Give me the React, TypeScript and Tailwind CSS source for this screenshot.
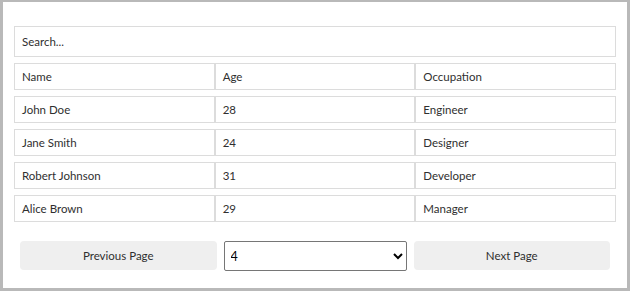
import React from "react";

const rows = [
  ["John Doe", "28", "Engineer"],
  ["Jane Smith", "24", "Designer"],
  ["Robert Johnson", "31", "Developer"],
  ["Alice Brown", "29", "Manager"],
];

function Cell({ children }: { children: React.ReactNode }) {
  return (
    <div className="h-[27px] border border-[#dcdcdc] px-[7px] pt-px flex items-center text-[11.5px] text-[#2f2f2f]">
      {children}
    </div>
  );
}

export default function App() {
  return (
    <div
      className="w-[630px] h-[291px] bg-white border-x-[3px] border-b-[3px] border-t-2 border-[#b9b9b9] px-[11px] pt-[24px]"
      style={{ fontFamily: 'Lato, "Noto Sans", sans-serif' }}
    >
      <input
        className="w-full h-[31px] border border-[#dcdcdc] px-[7px] text-[11.5px] text-[#2f2f2f] placeholder:text-[#2f2f2f] outline-none"
        placeholder="Search..."
      />
      <div className="mt-[6px] flex flex-col gap-[6px]">
        <div className="grid grid-cols-3">
          <Cell>Name</Cell>
          <Cell>Age</Cell>
          <Cell>Occupation</Cell>
        </div>
        {rows.map((r) => (
          <div key={r[0]} className="grid grid-cols-3">
            <Cell>{r[0]}</Cell>
            <Cell>{r[1]}</Cell>
            <Cell>{r[2]}</Cell>
          </div>
        ))}
      </div>
      <div className="mt-[19px] px-[6px] flex gap-[7px]">
        <button className="flex-1 h-[29px] rounded-[4px] bg-[#efefef] text-[11.5px] text-[#2f2f2f] pt-px">
          Previous Page
        </button>
        <select
          defaultValue="4"
          className="w-[183px] h-[30px] border border-[#767676] rounded-[2px] px-[2px] text-[12.5px] text-black bg-white"
        >
          <option value="1">1</option>
          <option value="2">2</option>
          <option value="3">3</option>
          <option value="4">4</option>
          <option value="5">5</option>
        </select>
        <button className="flex-1 h-[29px] rounded-[4px] bg-[#efefef] text-[11.5px] text-[#2f2f2f] pt-px">
          Next Page
        </button>
      </div>
    </div>
  );
}
